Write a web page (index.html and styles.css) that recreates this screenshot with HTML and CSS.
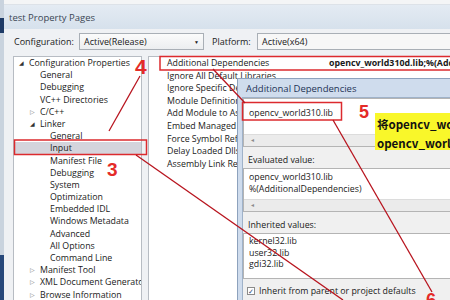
FILE: index.html
```html
<!DOCTYPE html>
<html>
<head>
	<meta charset="utf-8">
	<title>test Property Pages</title>
	<link rel="stylesheet" href="styles.css">
</head>
<body>
	<div class="pantalla">
		<div class="borde">
			<div class="borde_azul"></div>
			<div class="borde_azul abajo"></div>
		</div>
		<div class="ventana">
			<div class="tira"></div>
			<div class="titulo">test Property Pages</div>
			<div class="cuerpo">
				<div class="barra_config">
					<span class="etiq etiq_conf">Configuration:</span>
					<div class="combo combo_conf"><span>Active(Release)</span><span class="flecha">&#9660;</span></div>
					<span class="etiq etiq_plat">Platform:</span>
					<div class="combo combo_plat"><span>Active(x64)</span></div>
				</div>
				<div class="paneles">
					<div class="arbol">
						<div class="nodo n0"><span class="tri">&#9698;</span>Configuration Properties</div>
						<div class="nodo n1">General</div>
						<div class="nodo n1">Debugging</div>
						<div class="nodo n1">VC++ Directories</div>
						<div class="nodo n1"><span class="tri abierto">&#9655;</span>C/C++</div>
						<div class="nodo n1"><span class="tri">&#9698;</span>Linker</div>
						<div class="nodo n2">General</div>
						<div class="nodo n2 elegido">Input</div>
						<div class="nodo n2">Manifest File</div>
						<div class="nodo n2">Debugging</div>
						<div class="nodo n2">System</div>
						<div class="nodo n2">Optimization</div>
						<div class="nodo n2">Embedded IDL</div>
						<div class="nodo n2">Windows Metadata</div>
						<div class="nodo n2">Advanced</div>
						<div class="nodo n2">All Options</div>
						<div class="nodo n2">Command Line</div>
						<div class="nodo n1"><span class="tri abierto">&#9655;</span>Manifest Tool</div>
						<div class="nodo n1"><span class="tri abierto">&#9655;</span>XML Document Generator</div>
						<div class="nodo n1"><span class="tri abierto">&#9655;</span>Browse Information</div>
					</div>
					<div class="propiedades">
						<div class="fila"><span class="nombre">Additional Dependencies</span><span class="valor">opencv_world310d.lib;%(AdditionalDependencies)</span></div>
						<div class="fila"><span class="nombre">Ignore All Default Libraries</span></div>
						<div class="fila"><span class="nombre">Ignore Specific Default Libraries</span></div>
						<div class="fila"><span class="nombre">Module Definition File</span></div>
						<div class="fila"><span class="nombre">Add Module to Assembly</span></div>
						<div class="fila"><span class="nombre">Embed Managed Resource File</span></div>
						<div class="fila"><span class="nombre">Force Symbol References</span></div>
						<div class="fila"><span class="nombre">Delay Loaded Dlls</span></div>
						<div class="fila"><span class="nombre">Assembly Link Resource</span></div>
					</div>
				</div>
			</div>
		</div>

		<div class="dialogo">
			<div class="dialogo_titulo">Additional Dependencies</div>
			<div class="dialogo_cuerpo">
				<div class="caja caja_edit">
					<div class="caja_texto">opencv_world310.lib</div>
					<div class="scroll"><span>&#9666;</span></div>
				</div>
				<div class="etiq_dlg">Evaluated value:</div>
				<div class="caja caja_eval">
					<div class="caja_texto">
						<div>opencv_world310.lib</div>
						<div>%(AdditionalDependencies)</div>
					</div>
					<div class="scroll"><span>&#9666;</span></div>
				</div>
				<div class="etiq_dlg">Inherited values:</div>
				<div class="caja caja_her">
					<div class="caja_texto">
						<div>kernel32.lib</div>
						<div>user32.lib</div>
						<div>gdi32.lib</div>
					</div>
				</div>
				<label class="heredar"><span class="check">&#10003;</span>Inherit from parent or project defaults</label>
			</div>
		</div>

		<svg class="notas" width="450" height="300" viewBox="0 0 450 300">
			<rect x="14.5" y="140" width="132" height="14.5" />
			<rect x="160" y="56.5" width="300" height="13.5" />
			<rect x="242.5" y="102.5" width="99" height="17.5" />
			<line x1="140" y1="76" x2="109" y2="131" />
			<line x1="136" y1="155" x2="343" y2="300" />
			<line x1="213" y1="69" x2="245" y2="103" />
			<line x1="333" y1="120" x2="432" y2="292" />
		</svg>
		<span class="num num4">4</span>
		<span class="num num3">3</span>
		<span class="num num5">5</span>
		<span class="num num6">6</span>
		<div class="nota_amarilla">
			<div>将opencv_world310.lib改为</div>
			<div>opencv_world310d.lib</div>
		</div>
	</div>
</body>
</html>
```

FILE: styles.css
```css
* {
	box-sizing: border-box;
}

body {
	margin: 0;
	width: 450px;
	height: 300px;
	overflow: hidden;
	font-family: "Open Sans", "Noto Sans", sans-serif;
	font-size: 8.8px;
	color: #1a1a1a;
	background: #e6eaee;
}

.pantalla {
	position: relative;
	display: flex;
	width: 450px;
	height: 300px;
	overflow: hidden;
}

.borde {
	flex: 0 0 4px;
	background: #c9d3de;
	display: flex;
	flex-direction: column;
	padding-top: 18px;
}

.borde_azul {
	height: 15px;
	background: #1d3a66;
}

.borde_azul.abajo {
	margin-top: 222px;
	height: 45px;
	background: #27487a;
}

.ventana {
	flex: 1;
	display: flex;
	flex-direction: column;
	min-width: 0;
}

.tira {
	height: 5px;
	background: #f4f5f6;
	border-bottom: 1px solid #dde2e8;
}

.titulo {
	height: 24px;
	padding: 6px 0 0 5px;
	font-size: 9.5px;
	color: #3b4654;
	background: linear-gradient(#e4ebf3, #d6e1ec);
}

.cuerpo {
	flex: 1;
	background: #eff1f4;
	padding: 4px 0 0 9px;
	display: flex;
	flex-direction: column;
	min-height: 0;
}

.barra_config {
	display: flex;
	align-items: center;
	height: 17px;
}

.etiq {
	font-size: 9px;
	white-space: nowrap;
}

.etiq_conf {
	flex: 0 0 66px;
	padding-left: 1px;
}

.etiq_plat {
	flex: 0 0 45px;
	margin-left: 8px;
}

.combo {
	height: 17px;
	border: 1px solid #a9afb6;
	background: linear-gradient(#fbfbfb, #eceef0);
	display: flex;
	align-items: center;
	padding-left: 4px;
	font-size: 9px;
	white-space: nowrap;
}

.combo_conf {
	flex: 0 0 125px;
	justify-content: space-between;
}

.combo_plat {
	flex: 1;
	margin-right: -10px;
	background: #f7f7f7;
}

.flecha {
	font-size: 5px;
	margin-right: 4px;
}

.paneles {
	display: flex;
	margin-top: 6px;
	flex: 1;
	min-width: 0;
}

.arbol {
	flex: 0 0 129px;
	background: #fff;
	border: 1px solid #b7bcc3;
	border-bottom: none;
	white-space: nowrap;
	overflow: hidden;
}

.nodo {
	height: 12.2px;
	line-height: 12.2px;
	padding-left: 26px;
}

.nodo.n0 {
	padding-left: 15px;
}

.nodo.n2 {
	padding-left: 36px;
}

.nodo.elegido {
	background: #d4d4dc;
}

.tri {
	display: inline-block;
	width: 10px;
	margin-left: -10px;
	font-size: 6px;
	color: #333;
	vertical-align: top;
}

.tri.abierto {
	color: #777;
}

.propiedades {
	flex: 1;
	min-width: 0;
	overflow: hidden;
	margin-left: 6px;
	background: #fff;
	border: 1px solid #b7bcc3;
	border-right: none;
	border-bottom: none;
}

.fila {
	display: flex;
	height: 12.6px;
	line-height: 12.6px;
	white-space: nowrap;
}

.nombre {
	flex: 0 0 180px;
	padding-left: 18px;
	overflow: hidden;
}

.valor {
	font-weight: bold;
}

.dialogo {
	position: absolute;
	left: 237px;
	top: 78px;
	width: 240px;
	height: 240px;
	background: #cfdced;
	border: 1px solid #8da2bd;
	padding: 0 0 0 4px;
}

.dialogo_titulo {
	height: 18px;
	line-height: 20px;
	padding-left: 4px;
	font-size: 9.5px;
	color: #1e3456;
	white-space: nowrap;
}

.dialogo_cuerpo {
	background: #f0f0f0;
	height: 230px;
	border-left: 1px solid #9fb2c9;
	border-top: 1px solid #9fb2c9;
}

.caja {
	background: #fff;
	border: 1px solid #b4b4b4;
}

.caja_texto {
	padding: 0 5px;
	white-space: nowrap;
}

.caja_edit {
	height: 49px;
}

.caja_edit .caja_texto {
	height: 35px;
	line-height: 11px;
	padding-top: 9px;
}

.scroll {
	height: 12px;
	background: #ebebeb;
	border-top: 1px solid #dcdcdc;
	font-size: 6px;
	color: #8a8a8a;
	line-height: 11px;
	padding-left: 7px;
}

.etiq_dlg {
	height: 21px;
	padding: 7px 0 0 5px;
	line-height: 12px;
	white-space: nowrap;
}

.caja_eval {
	height: 44px;
}

.caja_eval .caja_texto {
	height: 30px;
	line-height: 12px;
	padding-top: 2px;
}

.caja_her {
	height: 46px;
}

.caja_her .caja_texto {
	line-height: 11.5px;
	padding-top: 2px;
}

.heredar {
	display: flex;
	align-items: center;
	margin-top: 6px;
	padding-left: 4px;
	height: 12px;
	white-space: nowrap;
}

.check {
	width: 8px;
	height: 8px;
	border: 1px solid #8b8b8b;
	background: #fff;
	font-size: 7px;
	line-height: 7px;
	text-align: center;
	color: #2a4a7a;
	margin-right: 4px;
}

.notas {
	position: absolute;
	left: 0;
	top: 0;
	pointer-events: none;
}

.notas rect {
	fill: none;
	stroke: #dc2a2e;
	stroke-width: 1.5;
}

.notas line {
	stroke: #b8141e;
	stroke-width: 1.3;
}

.num {
	position: absolute;
	font-family: "Liberation Sans", sans-serif;
	font-weight: bold;
	color: #e42b28;
	line-height: 1;
}

.num4 {
	left: 135px;
	top: 56px;
	font-size: 21px;
}

.num3 {
	left: 107px;
	top: 160px;
	font-size: 19px;
}

.num5 {
	left: 359px;
	top: 103px;
	font-size: 18px;
}

.num6 {
	left: 426px;
	top: 291px;
	font-size: 18px;
}

.nota_amarilla {
	position: absolute;
	left: 375px;
	top: 113px;
	width: 120px;
	height: 37px;
	background: #f9f72a;
	padding: 2px 0 0 2px;
	font-family: "Noto Sans CJK SC", sans-serif;
	font-weight: bold;
	font-size: 11.5px;
	line-height: 18.5px;
	white-space: nowrap;
	color: #111;
}
```
